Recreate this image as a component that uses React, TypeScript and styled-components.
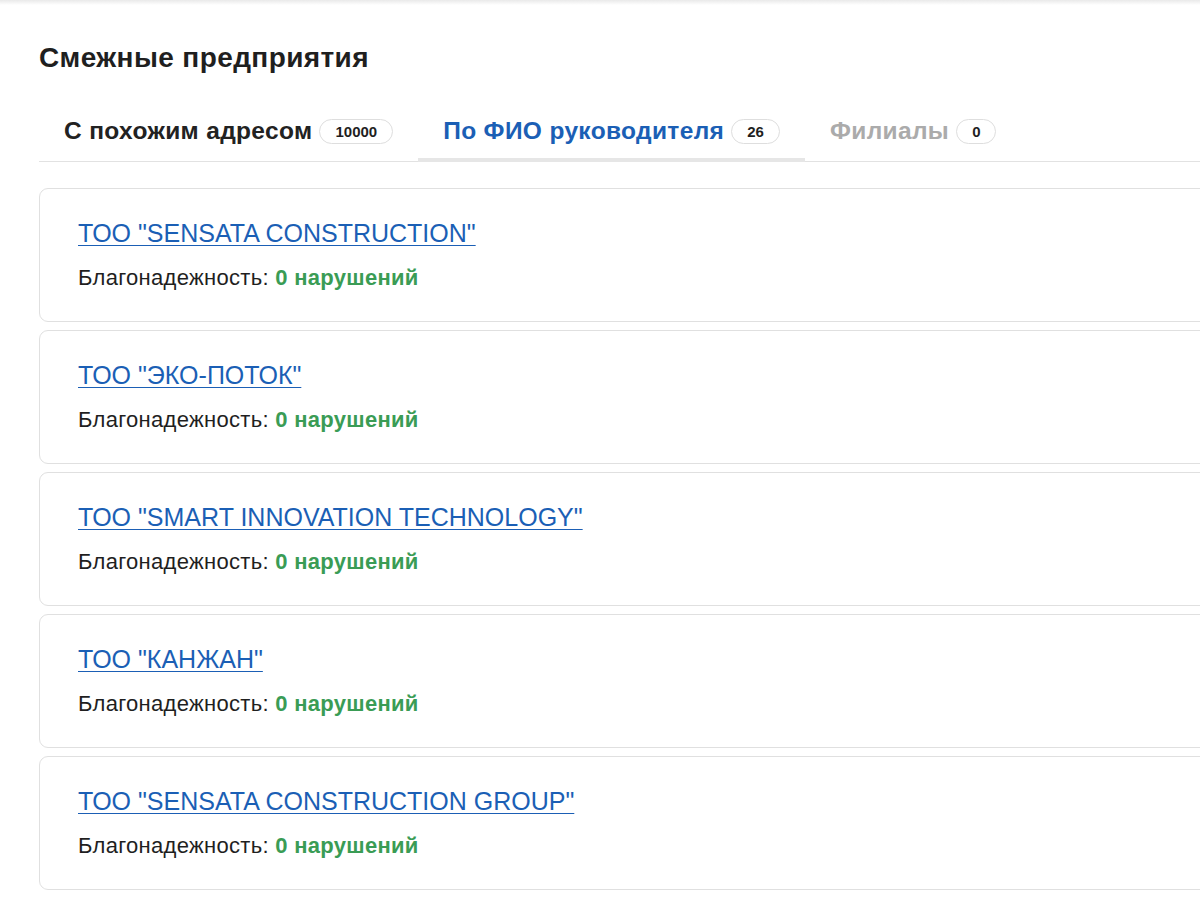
import React from "react";
import styled, { createGlobalStyle } from "styled-components";

const GlobalStyle = createGlobalStyle`
  html, body {
    margin: 0;
    padding: 0;
    background: #ffffff;
    overflow: hidden;
  }
  body {
    font-family: "Liberation Sans", Arial, Helvetica, sans-serif;
    color: #1f1f1f;
  }
`;

const TopShade = styled.div`
  height: 5px;
  background: linear-gradient(#e9e9e9, #ffffff);
`;

const Page = styled.div`
  width: 1320px;
  padding: 38px 0 0 39px;
  box-sizing: border-box;
`;

const Title = styled.h2`
  margin: 0;
  font-size: 28px;
  line-height: 30px;
  letter-spacing: 0.4px;
  font-weight: 700;
  color: #1f1f1f;
`;

const Tabs = styled.div`
  display: flex;
  margin-top: 31px;
  border-bottom: 1px solid #e2e2e2;
`;

const Tab = styled.div<{ $state: "default" | "active" | "disabled" }>`
  display: flex;
  align-items: center;
  gap: 7px;
  height: 54px;
  padding: 0 25px;
  margin-bottom: -1px;
  border-bottom: 4px solid
    ${(p) => (p.$state === "active" ? "#e6e6e6" : "transparent")};
  font-size: 24.5px;
  letter-spacing: 0.35px;
  font-weight: 700;
  color: ${(p) =>
    p.$state === "active" ? "#1b5fb5" : p.$state === "disabled" ? "#ababab" : "#222222"};
  cursor: pointer;
`;

const Badge = styled.span`
  display: inline-flex;
  align-items: center;
  height: 25px;
  padding: 0 15px;
  border: 1px solid #dedede;
  border-radius: 13px;
  box-sizing: border-box;
  font-size: 15px;
  letter-spacing: 0;
  font-weight: 700;
  color: #1f1f1f;
`;

const List = styled.div`
  display: flex;
  flex-direction: column;
  gap: 8px;
  margin-top: 26px;
`;

const Card = styled.div`
  height: 134px;
  box-sizing: border-box;
  padding: 30px 38px 0;
  border: 1px solid #e0e0e0;
  border-radius: 9px;
  background: #ffffff;
`;

const CompanyLink = styled.a`
  display: inline-block;
  font-size: 25px;
  line-height: 28px;
  color: #1b5fb5;
  text-decoration: underline;
  text-underline-offset: 3px;
  text-decoration-thickness: 1px;
`;

const Reliability = styled.div`
  margin-top: 19px;
  font-size: 22px;
  line-height: 24px;
  letter-spacing: 0.3px;
  color: #1f1f1f;
`;

const Violations = styled.span`
  font-weight: 700;
  color: #3a9c55;
`;

const tabs = [
  { label: "С похожим адресом", count: 10000, state: "default" as const },
  { label: "По ФИО руководителя", count: 26, state: "active" as const },
  { label: "Филиалы", count: 0, state: "disabled" as const },
];

const companies = [
  'ТОО "SENSATA CONSTRUCTION"',
  'ТОО "ЭКО-ПОТОК"',
  'ТОО "SMART INNOVATION TECHNOLOGY"',
  'ТОО "КАНЖАН"',
  'ТОО "SENSATA CONSTRUCTION GROUP"',
];

export default function App() {
  return (
    <>
      <GlobalStyle />
      <TopShade />
      <Page>
        <Title>Смежные предприятия</Title>
        <Tabs>
          {tabs.map((t) => (
            <Tab key={t.label} $state={t.state}>
              {t.label}
              <Badge>{t.count}</Badge>
            </Tab>
          ))}
        </Tabs>
        <List>
          {companies.map((name) => (
            <Card key={name}>
              <CompanyLink href="#">{name}</CompanyLink>
              <Reliability>
                Благонадежность: <Violations>0 нарушений</Violations>
              </Reliability>
            </Card>
          ))}
        </List>
      </Page>
    </>
  );
}
